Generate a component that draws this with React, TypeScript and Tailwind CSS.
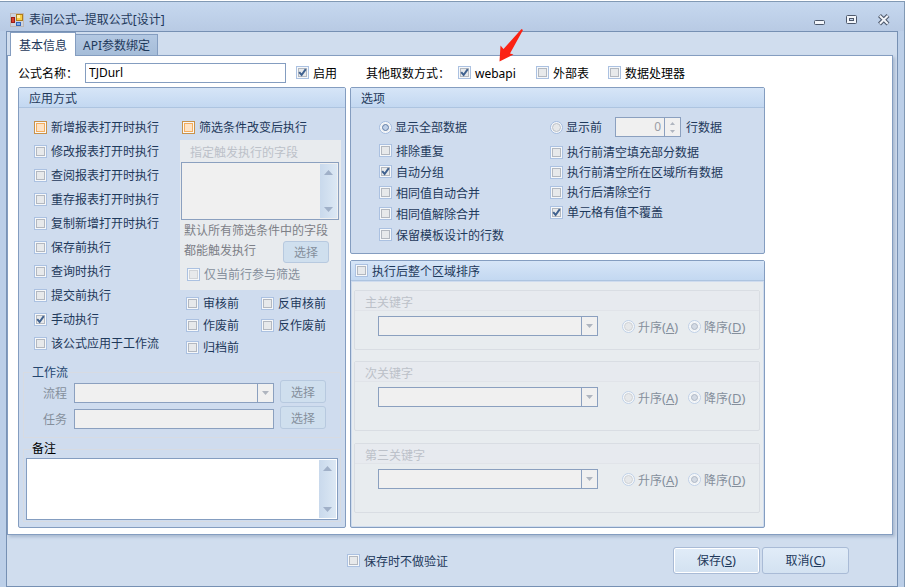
import React, { useId } from "react";

type CheckProps = {
  label: React.ReactNode;
  checked?: boolean;
  disabled?: boolean;
  hot?: boolean;
  className?: string;
};

function Check({ label, checked, disabled, hot, className = "" }: CheckProps) {
  const outer = hot ? "#c9924a" : "#abc1e1";
  const inner = hot ? "#f5ad5c" : disabled ? "#d0d3d7" : "#b3b8c0";
  const fill = hot ? "#fde3c6" : "#e7e9eb";
  return (
    <label className={`flex items-center gap-[4px] whitespace-nowrap ${disabled ? "text-[#858f9c]" : ""} ${className}`}>
      <span className="grid size-[13px] shrink-0">
        <input
          type="checkbox"
          defaultChecked={checked}
          disabled={disabled}
          className="peer col-start-1 row-start-1 size-[13px] appearance-none"
        />
        <svg viewBox="0 0 13 13" className="pointer-events-none col-start-1 row-start-1 size-[13px]">
          <rect x="0.5" y="0.5" width="12" height="12" fill="#f6f8fa" stroke={outer} />
          <rect x="2.5" y="2.5" width="8" height="8" fill={fill} stroke={inner} />
        </svg>
        <svg viewBox="0 0 13 13" className="pointer-events-none invisible col-start-1 row-start-1 size-[13px] peer-checked:visible">
          <path d="M3.2 6.2 L5.6 9 L9.8 3.2" fill="none" stroke="#3f618f" strokeWidth="2" />
        </svg>
      </span>
      <span className="pt-[2px]">{label}</span>
    </label>
  );
}

type RadioProps = {
  name: string;
  label: React.ReactNode;
  checked?: boolean;
  disabled?: boolean;
  className?: string;
};

function Radio({ name, label, checked, disabled, className = "" }: RadioProps) {
  return (
    <label className={`flex items-center gap-[3px] whitespace-nowrap ${disabled ? "text-[#858f9c]" : ""} ${className}`}>
      <span className="grid size-[13px] shrink-0">
        <input
          type="radio"
          name={name}
          defaultChecked={checked}
          disabled={disabled}
          className="peer col-start-1 row-start-1 size-[13px] appearance-none"
        />
        <svg viewBox="0 0 13 13" className="pointer-events-none col-start-1 row-start-1 size-[13px]">
          <circle cx="6.5" cy="6.5" r="6" fill="#f6f8fa" stroke={disabled ? "#bfd0e6" : "#a3bbde"} />
          <circle cx="6.5" cy="6.5" r="4" fill="#e6e8ea" stroke={disabled ? "#cfd2d6" : "#bcc1c8"} />
        </svg>
        <svg viewBox="0 0 13 13" className="pointer-events-none invisible col-start-1 row-start-1 size-[13px] peer-checked:visible">
          <circle cx="6.5" cy="6.5" r="4.500" fill="#f6f8fa" />
          <circle cx="6.5" cy="6.5" r="3" fill={disabled ? "#d3dae4" : "#bfd0e8"} stroke={disabled ? "#aeb7c5" : "#607ca5"} />
        </svg>
      </span>
      <span className="pt-[2px]">{label}</span>
    </label>
  );
}

function Hotkey({ letter }: { letter: string }) {
  return (
    <span className="text-[13px]">
      (<u>{letter}</u>)
    </span>
  );
}

function Combo({ id, label, className = "" }: { id?: string; label?: string; className?: string }) {
  return (
    <span className={`grid h-[20px] border border-[#8ba0bf] bg-[#f0f0f0] ${className}`}>
      <select
        id={id}
        aria-label={label}
        disabled
        className="col-start-1 row-start-1 w-full appearance-none bg-transparent disabled:opacity-100"
      />
      <span className="pointer-events-none col-start-1 row-start-1 flex w-[16px] items-center justify-center justify-self-end border-l border-[#8ba0bf]">
        <svg viewBox="0 0 7 4" className="h-[4px] w-[7px]">
          <path d="M0 0h7L3.5 4z" fill="#afb5bf" />
        </svg>
      </span>
    </span>
  );
}

function ScrollBar() {
  return (
    <span className="m-px flex w-[17px] shrink-0 flex-col items-center justify-between bg-linear-to-r from-[#c9d9ec] to-[#dce8f4] py-[6px]">
      <svg viewBox="0 0 9 5" className="h-[5px] w-[9px]">
        <path d="M0 5h9L4.500 0z" fill="#a0b0c8" />
      </svg>
      <svg viewBox="0 0 9 5" className="h-[5px] w-[9px]">
        <path d="M0 0h9L4.500 5z" fill="#a0b0c8" />
      </svg>
    </span>
  );
}

function PickButton({ className = "" }: { className?: string }) {
  return (
    <button
      disabled
      className={`w-[46px] rounded-[3px] border border-[#b7c9df] bg-[#cfdfee] pt-[2px] text-[#858f9c] ${className}`}
    >
      选择
    </button>
  );
}

function Panel({ title, className = "", children }: { title: React.ReactNode; className?: string; children: React.ReactNode }) {
  return (
    <section className={`flex flex-col rounded-[2px] border border-[#849dc0] bg-[#cfdcee] ${className}`}>
      <header className="flex h-[20px] shrink-0 items-center border-b border-[#adc4e0] bg-linear-to-b from-[#d6e5f7] to-[#c3d8f1]">
        {title}
      </header>
      {children}
    </section>
  );
}

function SortKey({ title, name, className = "" }: { title: string; name: string; className?: string }) {
  return (
    <section className={`rounded-[2px] border border-[#d9dde3] ${className}`}>
      <h3 className="h-[20px] border-b border-[#e1e4e9] bg-[#e7eaef] pl-[10px] leading-[24px] text-[#bcc1c9]">{title}</h3>
      <div className="flex items-center pt-[5px] pl-[23px]">
        <Combo label={title} className="w-[220px]" />
        <Radio name={name} disabled label={<>升序<Hotkey letter="A" /></>} className="ml-[24px] h-[20px] w-[66px]" />
        <Radio name={name} disabled checked label={<>降序<Hotkey letter="D" /></>} className="h-[20px]" />
      </div>
    </section>
  );
}

const timings = [
  "新增报表打开时执行",
  "修改报表打开时执行",
  "查阅报表打开时执行",
  "重存报表打开时执行",
  "复制新增打开时执行",
  "保存前执行",
  "查询时执行",
  "提交前执行",
  "手动执行",
  "该公式应用于工作流",
];
const mergeOptions = ["排除重复", "自动分组", "相同值自动合并", "相同值解除合并", "保留模板设计的行数"];
const clearOptions = ["执行前清空填充部分数据", "执行前清空所在区域所有数据", "执行后清除空行", "单元格有值不覆盖"];

function ApplyPanel() {
  const id = useId();
  return (
    <Panel title={<h2 className="pt-[3px] pl-[10px]">应用方式</h2>} className="w-[328px] shrink-0">
      <div className="flex pt-[7px] pl-[15px]">
        <div className="w-[146px]">
          {timings.map((t, i) => (
            <Check key={t} label={t} hot={i === 0} checked={t === "手动执行"} className="h-[24px]" />
          ))}
        </div>
        <div>
          <Check label="筛选条件改变后执行" hot className="h-[24px] pl-[2px]" />
          <section className="mt-px h-[150px] w-[161px] bg-[#e8ebee] px-px">
            <h3 className="h-[22px] pl-[9px] leading-[26px] text-[#bcc1c9]">指定触发执行的字段</h3>
            <div className="flex h-[58px] w-[158px] border border-[#8ba0bf] bg-[#f0f0f0]">
              <textarea aria-label="指定触发执行的字段" disabled className="min-w-0 flex-1 resize-none" />
              <ScrollBar />
            </div>
            <div className="grid grid-cols-[102px_1fr] pl-[3px]">
              <p className="col-span-2 h-[20px] whitespace-nowrap leading-[22px] text-[#7d8087]">默认所有筛选条件中的字段</p>
              <p className="leading-[22px] text-[#7d8087]">都能触发执行</p>
              <PickButton className="ml-[-3px] mt-px h-[22px]" />
            </div>
            <Check disabled label="仅当前行参与筛选" className="h-[22px] pl-[6px]" />
          </section>
          <div className="mt-[2px] grid grid-cols-[75px_1fr] pl-[6px]">
            {["审核前", "反审核前", "作废前", "反作废前", "归档前"].map((t) => (
              <Check key={t} label={t} className="h-[22px]" />
            ))}
          </div>
        </div>
      </div>
      <fieldset className="mx-[4px] mt-[6px] border border-[#d7dbe2] pb-[8px] text-[#858f9c]">
        <legend className="ml-[8px] h-[16px] leading-[18px] text-[#24466f]">工作流</legend>
        <div className="flex items-end pl-[19px]">
          <label htmlFor={id + "flow"} className="w-[31px] leading-[18px]">流程</label>
          <Combo id={id + "flow"} className="mr-[6px] w-[200px]" />
          <PickButton className="h-[23px]" />
        </div>
        <div className="mt-[3px] flex items-end pl-[19px]">
          <label htmlFor={id + "task"} className="w-[31px] leading-[18px]">任务</label>
          <input id={id + "task"} disabled className="mr-[6px] h-[20px] w-[200px] border border-[#8ba0bf] bg-[#f0f0f0]" />
          <PickButton className="h-[23px]" />
        </div>
      </fieldset>
      <fieldset className="mx-[4px] mt-[3px] mb-[5px] border border-[#d7dbe2] px-[2px] pb-px">
        <legend className="ml-[6px] h-[16px] leading-[16px] text-black">备注</legend>
        <div className="mt-px flex h-[62px] border border-[#849dc0] bg-white">
          <textarea aria-label="备注" className="min-w-0 flex-1 resize-none outline-none" />
          <ScrollBar />
        </div>
      </fieldset>
    </Panel>
  );
}

function OptionsPanel() {
  return (
    <Panel title={<h2 className="pt-[3px] pl-[10px]">选项</h2>} className="h-[167px]">
      <div className="flex pt-[7px] pl-[28px]">
        <div className="w-[171px]">
          <Radio name="show" checked label="显示全部数据" className="mb-px h-[24px]" />
          {mergeOptions.map((t) => (
            <Check key={t} label={t} checked={t === "自动分组"} className="h-[21px]" />
          ))}
        </div>
        <div>
          <div className="mb-[3px] flex h-[24px] items-center">
            <Radio name="show" label="显示前" className="w-[65px]" />
            <span className="flex h-[20px] w-[66px] border border-[#8ba0bf] bg-[#f0f0f0]">
              <input aria-label="行数" disabled defaultValue="0" className="min-w-0 flex-1 pr-[3px] text-right text-[#9a9ea6]" />
              <span className="flex w-[16px] flex-col items-center justify-center gap-[5px] border-l border-[#8ba0bf]">
                <svg viewBox="0 0 5 3" className="h-[3px] w-[5px]"><path d="M0 3h5L2.500 0z" fill="#afb5bf" /></svg>
                <svg viewBox="0 0 5 3" className="h-[3px] w-[5px]"><path d="M0 0h5L2.500 3z" fill="#afb5bf" /></svg>
              </span>
            </span>
            <span className="pt-[2px] pl-[5px]">行数据</span>
          </div>
          {clearOptions.map((t) => (
            <Check key={t} label={t} checked={t === "单元格有值不覆盖"} className="h-[20px]" />
          ))}
        </div>
      </div>
    </Panel>
  );
}

function TitleBar() {
  return (
    <header className="flex h-[29px] items-center bg-linear-to-b from-[#c6d8ef] to-[#b8cae4] pt-[6px] pr-[14px] pl-[10px]">
      <svg viewBox="0 0 15 14" className="mr-[4px] h-[14px] w-[15px]">
        <rect x="0.5" y="0.5" width="13" height="13" fill="#ccd3df" stroke="#bdb7b5" />
        <rect x="1.500" y="4.500" width="3" height="5" fill="#d8402f" stroke="#9c1f17" />
        <rect x="6.500" y="1.500" width="6" height="6" fill="#f8cf4a" stroke="#b07d1a" />
        <rect x="7" y="2" width="3" height="3" fill="#fdf0a8" />
        <rect x="6.500" y="9.500" width="4" height="3" fill="#7fb0ef" stroke="#3565b8" />
      </svg>
      <h1 className="flex-1">表间公式--提取公式[设计]</h1>
      <div className="flex items-center gap-[20px]">
        <button aria-label="最小化" className="size-[12px]">
          <svg viewBox="0 0 12 12" className="size-[12px]">
            <rect x="0.500" y="6.500" width="10" height="4" rx="1" fill="#f2f5fa" stroke="#4d586b" />
          </svg>
        </button>
        <button aria-label="最大化" className="size-[12px]">
          <svg viewBox="0 0 12 12" className="size-[12px]">
            <rect x="0.500" y="1.500" width="10" height="8" rx="1" fill="#f2f5fa" stroke="#4d586b" />
            <rect x="3.500" y="4.500" width="4" height="2" fill="#c3d3ea" stroke="#4d586b" />
          </svg>
        </button>
        <button aria-label="关闭" className="size-[12px]">
          <svg viewBox="0 0 12 12" className="size-[12px]">
            <path d="M1.500 1.500l8.500 8.500M10 1.500L1.500 10" stroke="#4d586b" strokeWidth="4.200" />
            <path d="M1.800 1.800l8 8M9.800 1.800L1.800 9.800" stroke="#f2f5fa" strokeWidth="2" />
          </svg>
        </button>
      </div>
    </header>
  );
}

export default function App() {
  return (
    <div className="min-h-screen bg-white pt-px pr-px font-['Noto_Sans','Noto_Sans_CJK_SC',sans-serif] text-[12px] leading-[16px] text-[#1e395b]">
      <div className="border-t border-r border-[#8199b4] bg-[#bccfe8]">
        <TitleBar />
        <main className="mr-[6px] ml-[6px] flex flex-col border border-[#7690b3] bg-[#d0ddee]">
          <nav className="flex h-[23px] items-end pl-[3px]">
            <button className="z-10 -mb-px h-[24px] w-[66px] border border-b-0 border-[#849dc0] bg-white pt-[2px]">基本信息</button>
            <button className="-ml-px h-[21px] w-[83px] border border-b-0 border-[#849dc0] bg-linear-to-b from-[#b3c8e2] to-[#a6bdd9] pt-[2px]">
              API参数绑定
            </button>
          </nav>
          <div className="mr-[4px] border border-[#849dc0] bg-white px-[10px] pb-[6px] shadow-[2px_2px_3px_#a9b9cf]">
            <div className="flex h-[31px] items-center pt-[2px] text-black">
              <label htmlFor="formula-name" className="w-[67px] pt-[2px] whitespace-nowrap">公式名称：</label>
              <input
                id="formula-name"
                defaultValue="TJDurl"
                className="h-[20px] w-[201px] border border-[#849dc0] bg-white px-[3px] outline-none"
              />
              <Check label="启用" checked className="ml-[10px] w-[70px]" />
              <span className="w-[92px] pt-[2px]">其他取数方式：</span>
              <Check label="webapi" checked className="w-[78px]" />
              <Check label="外部表" className="w-[72px]" />
              <Check label="数据处理器" />
            </div>
            <div className="flex gap-[4px]">
              <ApplyPanel />
              <div className="flex w-[415px] flex-col gap-[6px]">
                <OptionsPanel />
                <Panel title={<Check label="执行后整个区域排序" className="pl-[4px]" />} className="flex-1">
                  <div className="m-px flex-1 bg-[#e8ecef] pt-[8px] pr-[3px] pl-[2px]">
                    <SortKey title="主关键字" name="key1" className="h-[60px]" />
                    <SortKey title="次关键字" name="key2" className="mt-[11px] h-[70px]" />
                    <SortKey title="第三关键字" name="key3" className="mt-[12px] h-[70px]" />
                  </div>
                </Panel>
              </div>
            </div>
          </div>
          <footer className="flex h-[51px] items-center gap-[2px] pr-[48px] pl-[340px]">
            <Check label="保存时不做验证" className="mr-auto" />
            <button className="h-[27px] w-[87px] rounded-[3px] border border-[#a9bbd6] bg-linear-to-b from-[#e1ecf8] to-[#d3e2f1] shadow-[inset_0_0_0_1px_#ffffff]">
              保存<Hotkey letter="S" />
            </button>
            <button className="h-[27px] w-[87px] rounded-[3px] border border-[#a9bbd6] bg-linear-to-b from-[#e1ecf8] to-[#d3e2f1]">
              取消<Hotkey letter="C" />
            </button>
          </footer>
        </main>
      </div>
      <svg viewBox="0 0 24 34" className="pointer-events-none absolute top-[28px] left-[499px] h-[34px] w-[24px]">
        <path d="M22.500 1 L24 2 L11 25.500 L14.500 26.500 L0.500 33.500 L1.500 17.500 L4.500 21 Z" fill="#fb2213" />
      </svg>
    </div>
  );
}
